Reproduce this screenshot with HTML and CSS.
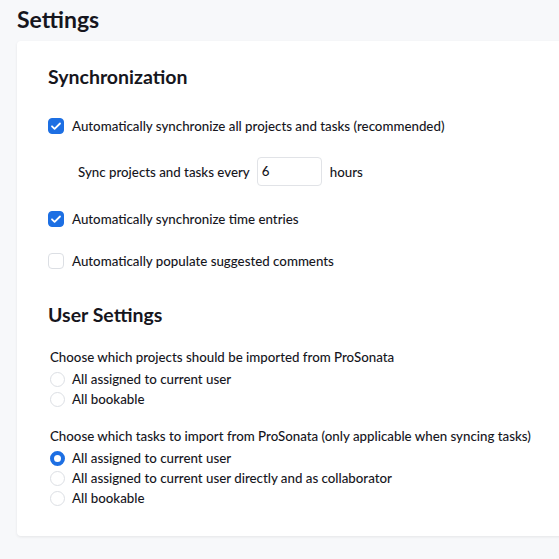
FILE: index.html
```html
<!DOCTYPE html>
<html>
<head>
<meta charset="utf-8">
<link rel="stylesheet" href="styles.css">
</head>
<body>
<h1 class="page-title">Settings</h1>
<div class="card">
  <h2 class="section-title">Synchronization</h2>
  <div class="check-row row1">
    <span class="box checked"><svg viewBox="0 0 16 16" width="16" height="16"><path d="M4 8.3l2.6 2.6L12 5.5" fill="none" stroke="#fff" stroke-width="1.8" stroke-linecap="round" stroke-linejoin="round"/></svg></span>
    <span class="label">Automatically synchronize all projects and tasks (recommended)</span>
  </div>
  <div class="sync-row">
    <span class="label">Sync projects and tasks every</span>
    <span class="num-input">6</span>
    <span class="label">hours</span>
  </div>
  <div class="check-row row2">
    <span class="box checked"><svg viewBox="0 0 16 16" width="16" height="16"><path d="M4 8.3l2.6 2.6L12 5.5" fill="none" stroke="#fff" stroke-width="1.8" stroke-linecap="round" stroke-linejoin="round"/></svg></span>
    <span class="label">Automatically synchronize time entries</span>
  </div>
  <div class="check-row row3">
    <span class="box"></span>
    <span class="label">Automatically populate suggested comments</span>
  </div>
  <h2 class="section-title user">User Settings</h2>
  <p class="question q1">Choose which projects should be imported from ProSonata</p>
  <div class="radio-group">
    <div class="radio-row"><span class="radio"></span><span class="label">All assigned to current user</span></div>
    <div class="radio-row"><span class="radio"></span><span class="label">All bookable</span></div>
  </div>
  <p class="question q2">Choose which tasks to import from ProSonata (only applicable when syncing tasks)</p>
  <div class="radio-group">
    <div class="radio-row"><span class="radio selected"></span><span class="label">All assigned to current user</span></div>
    <div class="radio-row"><span class="radio"></span><span class="label">All assigned to current user directly and as collaborator</span></div>
    <div class="radio-row"><span class="radio"></span><span class="label">All bookable</span></div>
  </div>
</div>
</body>
</html>
```
FILE: styles.css
```css
html, body {
  margin: 0;
  padding: 0;
}
body {
  background: #f7f8fa;
  font-family: Lato, "Noto Sans", sans-serif;
  color: #16161d;
  width: 559px;
  height: 559px;
  overflow: hidden;
}
.page-title {
  margin: 0;
  padding: 7px 0 0 17px;
  height: 41px;
  box-sizing: border-box;
  font-size: 23px;
  line-height: 24px;
  font-weight: 700;
}
.card {
  margin-left: 17px;
  width: 560px;
  background: #fff;
  border-radius: 4px;
  box-shadow: 0 1px 3px rgba(0,0,0,0.08);
  padding: 24px 0 28px 31px;
  box-sizing: border-box;
}
.section-title {
  margin: 0;
  font-size: 19.5px;
  line-height: 24px;
  font-weight: 700;
}
.label {
  font-size: 13.3px;
  line-height: 20px;
  font-weight: 500;
}
.check-row {
  display: flex;
  align-items: center;
  gap: 8px;
  height: 20px;
}
.row1 { margin-top: 27px; }
.row2 { margin-top: 23px; }
.row3 { margin-top: 22px; }
.box {
  width: 16px;
  height: 16px;
  box-sizing: border-box;
  border-radius: 4px;
  border: 1px solid #dcdfe4;
  background: #fff;
  display: flex;
}
.box.checked {
  background: #1d6fe3;
  border-color: #1d6fe3;
}
.box svg { margin: -1px; }
.sync-row {
  display: flex;
  align-items: center;
  margin-top: 21px;
  padding-left: 30px;
  height: 29px;
}
.num-input {
  margin-left: 7px;
  margin-right: 8px;
  width: 65px;
  height: 29px;
  box-sizing: border-box;
  border: 1px solid #e1e3e7;
  border-radius: 4px;
  font-size: 13.3px;
  line-height: 27px;
  padding-left: 4px;
  font-weight: 500;
}
.user { margin-top: 32px; }
.question {
  margin: 0;
  padding-left: 2px;
  font-size: 13.3px;
  line-height: 20px;
  font-weight: 500;
}
.q1 { margin-top: 20px; }
.q2 { margin-top: 17px; }
.radio-group {
  margin-top: 2px;
}
.radio-row {
  display: flex;
  align-items: center;
  gap: 7px;
  height: 20px;
  padding-left: 2px;
}
.radio {
  width: 15px;
  height: 15px;
  box-sizing: border-box;
  border-radius: 50%;
  border: 1px solid #dcdfe4;
  background: #fff;
}
.radio.selected {
  border: 4px solid #1d6fe3;
}
```
